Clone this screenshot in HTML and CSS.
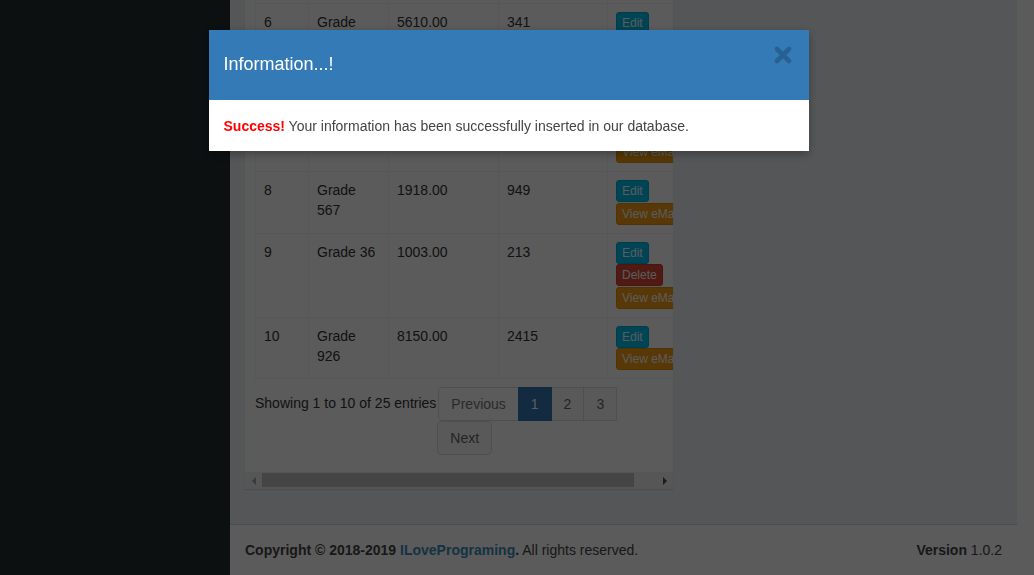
FILE: index.html
```html
<!DOCTYPE html>
<html lang="en">
<head>
<meta charset="utf-8">
<title>Grades</title>
<link rel="stylesheet" href="styles.css">
</head>
<body class="modal-open">
<div class="wrapper">
  <aside class="main-sidebar"></aside>
  <div class="content-wrapper">
    <section class="content">
      <div class="box">
        <div class="box-body">
          <table class="table">
            <colgroup>
              <col class="c-id"><col class="c-name"><col class="c-price"><col class="c-qty"><col class="c-act">
            </colgroup>
            <tbody>
              <tr>
                <td>5</td><td>Grade 218</td><td>4420.00</td><td>127</td>
                <td><div class="actions"><button class="btn btn-info">Edit</button><button class="btn btn-danger">Delete</button><button class="btn btn-warning">View eMail</button></div></td>
              </tr>
              <tr>
                <td>6</td><td>Grade 412</td><td>5610.00</td><td>341</td>
                <td><div class="actions"><button class="btn btn-info">Edit</button><button class="btn btn-danger">Delete</button><button class="btn btn-warning">View eMail</button></div></td>
              </tr>
              <tr>
                <td>7</td><td>Grade 784</td><td>2275.00</td><td>508</td>
                <td><div class="actions"><button class="btn btn-info">Edit</button><button class="btn btn-danger">Delete</button><button class="btn btn-warning">View eMail</button></div></td>
              </tr>
              <tr>
                <td>8</td><td>Grade 567</td><td>1918.00</td><td>949</td>
                <td><div class="actions"><button class="btn btn-info">Edit</button><button class="btn btn-warning">View eMail</button></div></td>
              </tr>
              <tr>
                <td>9</td><td>Grade 36</td><td>1003.00</td><td>213</td>
                <td><div class="actions"><button class="btn btn-info">Edit</button><button class="btn btn-danger">Delete</button><button class="btn btn-warning">View eMail</button></div></td>
              </tr>
              <tr>
                <td>10</td><td>Grade 926</td><td>8150.00</td><td>2415</td>
                <td><div class="actions"><button class="btn btn-info">Edit</button><button class="btn btn-warning">View eMail</button></div></td>
              </tr>
            </tbody>
          </table>
          <div class="dt-foot">
            <div class="dt-info">Showing 1 to 10 of 25 entries</div>
            <ul class="pagination">
              <li class="disabled"><a href="#">Previous</a></li>
              <li class="active"><a href="#">1</a></li>
              <li><a href="#">2</a></li>
              <li><a href="#">3</a></li>
              <li class="next"><a href="#">Next</a></li>
            </ul>
          </div>
        </div>
        <div class="hscroll">
          <span class="arrow arrow-left"></span>
          <div class="track"><div class="thumb"></div></div>
          <span class="arrow arrow-right"></span>
        </div>
      </div>
    </section>
    <footer class="main-footer">
      <div><strong>Copyright &copy; 2018-2019 <a href="#">ILovePrograming</a>.</strong> All rights reserved.</div>
      <div><b>Version</b> 1.0.2</div>
    </footer>
  </div>
</div>

<div class="modal-backdrop"></div>
<div class="modal">
  <div class="modal-dialog">
    <div class="modal-header">
      <h4 class="modal-title">Information...!</h4>
      <button type="button" class="close" aria-label="Close">
        <svg width="18" height="18" viewBox="0 0 18 18" aria-hidden="true">
          <path d="M3 3 L15 15 M15 3 L3 15" stroke="#000" stroke-width="4.6" stroke-linecap="round" fill="none"/>
        </svg>
      </button>
    </div>
    <div class="modal-body">
      <strong class="success">Success!</strong> Your information has been successfully inserted in our database.
    </div>
  </div>
</div>
</body>
</html>
```

FILE: styles.css
```css
* { box-sizing: border-box; }

html, body {
  margin: 0;
  height: 575px;
  overflow: hidden;
}

body {
  padding-right: 17px;
  background: #fff;
  font-family: "Liberation Sans", Arial, Helvetica, sans-serif;
  font-size: 14px;
  line-height: 20px;
  color: #333;
}

a { text-decoration: none; }

.wrapper {
  display: flex;
  height: 575px;
}

.main-sidebar {
  width: 230px;
  flex: none;
  background: #222d32;
}

.content-wrapper {
  flex: 1;
  min-width: 0;
  display: flex;
  flex-direction: column;
  background: #ecf0f5;
}

.content {
  flex: 1;
  min-height: 0;
  overflow: hidden;
  display: flex;
  flex-direction: column;
  justify-content: flex-end;
  padding: 0 15px 15px;
}

.box {
  flex: none;
  width: 428px;
  margin-bottom: 20px;
  background: #fff;
  box-shadow: 0 1px 1px rgba(0, 0, 0, 0.1);
}

.box-body {
  padding: 10px;
  overflow: hidden;
}

.table {
  width: 438px;
  table-layout: fixed;
  border-collapse: collapse;
  border: 1px solid #f4f4f4;
  margin-bottom: 8px;
}

.c-id { width: 53px; }
.c-name { width: 80px; }
.c-price { width: 110px; }
.c-qty { width: 109px; }
.c-act { width: 86px; }

.table td {
  padding: 8px;
  border: 1px solid #f4f4f4;
  vertical-align: top;
  line-height: 20px;
}

.actions {
  display: flex;
  flex-direction: column;
  align-items: flex-start;
  gap: 0.5px;
}

.btn {
  display: inline-block;
  margin: 0;
  padding: 1px 5px;
  font-family: inherit;
  font-size: 12px;
  line-height: 18px;
  color: #fff;
  border: 1px solid transparent;
  border-radius: 3px;
  white-space: nowrap;
  cursor: pointer;
}

.btn-info { background: #00c0ef; border-color: #00acd6; }
.btn-danger { background: #dd4b39; border-color: #d73925; }
.btn-warning { background: #f39c12; border-color: #e08e0b; }

.dt-foot {
  display: flex;
  align-items: flex-start;
  margin-bottom: 7px;
}

.dt-info {
  padding-top: 6px;
  white-space: nowrap;
}

.pagination {
  flex: 1;
  min-width: 0;
  display: flex;
  flex-wrap: wrap;
  list-style: none;
  margin: 0 0 0 2px;
  padding: 0;
}

.pagination a {
  display: block;
  margin-left: -1px;
  padding: 6px 12px;
  line-height: 20px;
  color: #666;
  background: #fafafa;
  border: 1px solid #ddd;
}

.pagination li:first-child a {
  margin-left: 0;
  border-radius: 4px 0 0 4px;
}

.pagination .disabled a { color: #777; background: #fff; }

.pagination .active a {
  position: relative;
  color: #fff;
  background: #337ab7;
  border-color: #337ab7;
}

.pagination .next a { border-radius: 4px; }

.hscroll {
  display: flex;
  height: 17px;
  background: #f1f1f1;
}

.arrow {
  width: 17px;
  flex: none;
  display: flex;
  align-items: center;
  justify-content: center;
}

.arrow::before {
  content: "";
  border-top: 4px solid transparent;
  border-bottom: 4px solid transparent;
}

.arrow-left::before { border-right: 4px solid #a3a3a3; }
.arrow-right::before { border-left: 4px solid #505050; }

.track {
  flex: 1;
  padding-top: 1px;
}

.thumb {
  width: 372px;
  height: 14px;
  background: #c1c1c1;
}

.main-footer {
  flex: none;
  display: flex;
  justify-content: space-between;
  padding: 15px;
  background: #fff;
  border-top: 1px solid #d2d6de;
  color: #444;
}

.main-footer a { color: #3c8dbc; }

/* modal */
.modal-backdrop {
  position: fixed;
  inset: 0;
  background: rgba(0, 0, 0, 0.643);
}

.modal {
  position: fixed;
  inset: 0;
  padding-right: 17px;
  display: flex;
  justify-content: center;
  align-items: flex-start;
}

.modal-dialog {
  width: 600px;
  margin-top: 30px;
  background: #fff;
  box-shadow: 0 3px 9px rgba(0, 0, 0, 0.3);
}

.modal-header {
  display: flex;
  align-items: flex-start;
  height: 70px;
  padding: 16px 17px 0 15px;
  background: #337ab7;
  color: #fff;
}

.modal-title {
  margin: 8px 0 0;
  font-size: 18px;
  font-weight: normal;
  line-height: 20px;
}

.close {
  margin-left: auto;
  width: 18px;
  height: 18px;
  padding: 0;
  border: 0;
  background: none;
  opacity: 0.2;
  cursor: pointer;
}

.close svg { display: block; }

.modal-body {
  padding: 16px 15px 15px;
  line-height: 20px;
  color: #444;
}

.success { color: #f00; }
```
